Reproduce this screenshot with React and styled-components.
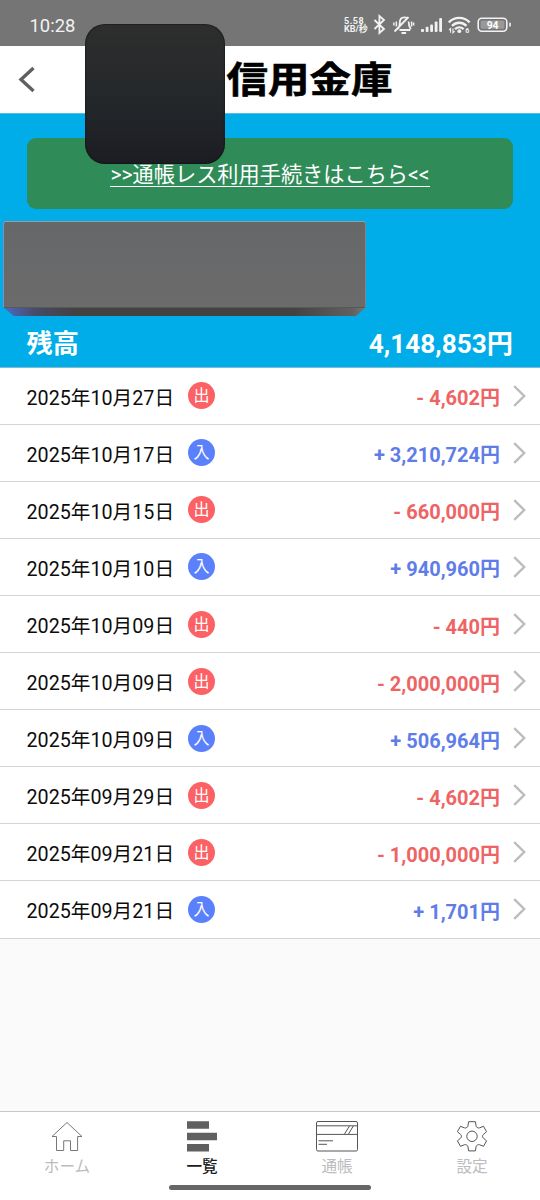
import styled, { createGlobalStyle, css } from "styled-components";

const GlobalStyle = createGlobalStyle`
    * {
        box-sizing: border-box;
    }
    body {
        margin: 0;
        background: #fafafa;
        font-family: Roboto, "Noto Sans CJK JP", sans-serif;
    }
`;

const Screen = styled.div`
    position: relative;
    display: flex;
    flex-direction: column;
    width: 540px;
    height: 1200px;
    overflow: hidden;
    background: #fafafa;
`;

const StatusBar = styled.div`
    display: flex;
    align-items: center;
    justify-content: space-between;
    flex: none;
    height: 46px;
    padding: 5px 28px 0 29.5px;
    background: #757575;
    color: #f2f2f2;
`;

const Clock = styled.div`
    font-size: 18.4px;
    font-weight: 400;
    line-height: 24px;
`;

const StatusIcons = styled.div`
    display: flex;
    align-items: center;
    height: 30px;
    padding-bottom: 1px;
`;

const NetSpeed = styled.div`
    width: 25px;
    font-size: 9px;
    font-weight: 700;
    line-height: 8.5px;
    white-space: nowrap;
`;

const SpeedValue = styled.div`
    letter-spacing: 0.5px;
`;

const Header = styled.header`
    display: flex;
    align-items: center;
    flex: none;
    height: 67px;
    padding: 0 0 0 18px;
    background: #fff;
`;

const BankName = styled.div`
    margin-left: 191.5px;
    padding-top: 3px;
    font-size: 41.5px;
    font-weight: 700;
    line-height: 60px;
    color: #000;
    -webkit-text-stroke: 0.7px #000;
    transform: scaleY(0.87);
`;

const AppCover = styled.div`
    position: absolute;
    left: 85px;
    top: 24px;
    width: 139.5px;
    height: 139.5px;
    border-radius: 20px;
    background: linear-gradient(#2d2e2d, #25282b 50%, #1b1d22);
    box-shadow: inset 0 0 1px 1px rgba(10, 14, 16, 0.4);
`;

const Summary = styled.section`
    display: flex;
    flex-direction: column;
    flex: none;
    height: 254.6px;
    padding-top: 24px;
    background: #00ade9;
    border-top: 1px solid #55bfe0;
    border-bottom: 1px solid #7fbcd2;
`;

const NoticeButton = styled.div`
    display: flex;
    justify-content: center;
    flex: none;
    height: 70.5px;
    margin: 0 27px;
    padding-top: 21px;
    border-radius: 9px;
    background: #2f8b57;
    color: #fff;
    font-size: 21.2px;
    line-height: 32px;
`;

const NoticeLink = styled.span`
    height: 28px;
    border-bottom: 1px solid #fff;
    white-space: nowrap;
`;

const AccountPlate = styled.div`
    flex: none;
    width: 363px;
    height: 95px;
    margin: 12.5px 0 0 3px;
`;

const PlateFront = styled.div`
    height: 87px;
    border: 1px solid #858589;
    border-top-color: #9a9ca8;
    border-left-color: #8290b8;
    border-bottom-color: #59595b;
    border-radius: 3px 3px 2px 2px;
    background: linear-gradient(#666768, #6b6b6c);
`;

const PlateEdge = styled.div`
    height: 8px;
    background: linear-gradient(90deg, #4d6bc4, #464b68 9%, #424242 20%, #424242 80%, #606060 96%, #777);
    clip-path: polygon(1px 0, 362px 0, 353px 100%, 11px 100%);
`;

const Balance = styled.div`
    display: flex;
    align-items: center;
    justify-content: space-between;
    height: 49px;
    padding: 2px 27px 0 26.5px;
    color: #fff;
    font-size: 26.2px;
    font-weight: 700;
`;

const List = styled.div`
    flex: none;
    background: #fff;
`;

const Row = styled.div`
    display: flex;
    align-items: center;
    height: 57.1px;
    padding: 0 14px 0 26.5px;
    border-bottom: 1px solid #d4d4d4;
`;

const RowDate = styled.div`
    width: 161.5px;
    font-size: 19.7px;
    line-height: 30px;
    white-space: nowrap;
    color: #0c0c0c;
    padding-top: 6px;
`;

const Badge = styled.div`
    display: flex;
    align-items: center;
    justify-content: center;
    width: 27px;
    height: 27px;
    padding-top: 1px;
    border-radius: 50%;
    background: ${({ $income }) => ($income ? "#5b80fb" : "#fb6165")};
    color: #fff;
    font-size: 16px;
    line-height: 26px;
`;

const Amount = styled.div`
    flex: 1;
    padding-top: 5px;
    text-align: right;
    font-size: 20px;
    font-weight: 700;
    line-height: 30px;
    color: ${({ $income }) => ($income ? "#5f7de8" : "#ee6464")};
`;

const RowArrow = styled.svg`
    flex: none;
    width: 13px;
    height: 22px;
    margin-left: 13px;
`;

const TabBar = styled.nav`
    display: grid;
    grid-template-columns: repeat(4, 1fr);
    flex: none;
    height: 89px;
    margin-top: auto;
    border-top: 1px solid #c9c9c9;
    background: #fff;
`;

const Tab = styled.div`
    display: flex;
    flex-direction: column;
    align-items: center;
    padding: 9px 1px 0 0;
    font-size: 15.6px;
    line-height: 24px;
    color: #bcbcc0;
    ${({ $active }) =>
        $active &&
        css`
            color: #1c1c1c;
            font-weight: 500;
        `}
    svg {
        flex: none;
        height: 32px;
    }
`;

const TabLabel = styled.span`
    margin-top: 2px;
`;

const GestureBar = styled.div`
    position: absolute;
    left: 169px;
    bottom: 10px;
    width: 202px;
    height: 5px;
    border-radius: 3px;
    background: #666;
`;

const entries = [
    { date: "2025年10月27日", amount: "4,602" },
    { date: "2025年10月17日", amount: "3,210,724", income: true },
    { date: "2025年10月15日", amount: "660,000" },
    { date: "2025年10月10日", amount: "940,960", income: true },
    { date: "2025年10月09日", amount: "440" },
    { date: "2025年10月09日", amount: "2,000,000" },
    { date: "2025年10月09日", amount: "506,964", income: true },
    { date: "2025年09月29日", amount: "4,602" },
    { date: "2025年09月21日", amount: "1,000,000" },
    { date: "2025年09月21日", amount: "1,701", income: true },
];

// bluetooth, muted bell, signal, wifi and battery, in one strip
const SystemIcons = () => (
    <svg width="143" height="26" viewBox="369 12 143 26" fill="none" stroke="#f2f2f2" strokeWidth="1.8">
        <path d="M374.5 20l9.5 9-4.6 4V16l4.6 4-9.5 9" />
        <path d="M399.5 30h10.8M397.5 29.2c2-1.8 2.3-3.6 2.3-6.4 0-3.2 1.6-5.4 4.4-5.4 1 0 2 .3 2.7.9M408.6 21.6c0 3 .2 5 2.2 7.6M394.5 31.5l14-14.5M401.5 33h4.6" />
        <path strokeWidth="1.5" d="M396.4 21.5v5M393.9 22.5v3M411.6 21.5v5M413.6 22.5v3" />
        <g fill="#f2f2f2" stroke="none">
            <rect x="421" y="29" width="3" height="3" rx="1" />
            <rect x="425.7" y="26.8" width="2.8" height="5.2" rx="1" />
            <rect x="430.2" y="24.4" width="2.8" height="7.6" rx="1" />
            <rect x="434.7" y="21.5" width="2.8" height="10.5" rx="1" />
            <rect x="439.2" y="18" width="2.8" height="14" rx="1" />
        </g>
        <path d="M448.8 22.4c5.8-6 15-6 20.8 0M452 25.9c4.2-4.2 10.3-4.2 14.5 0M455 29.2c2.6-2.5 6-2.5 8.6 0" strokeWidth="2.3" />
        <circle cx="459.3" cy="31.2" r="1.9" fill="#f2f2f2" stroke="none" />
        <path d="M450.6 32.8v-4.3l-1.6 1.6M453 28.5v4.3l1.6-1.6" strokeWidth="1.1" />
        <text x="465.3" y="33.4" fill="#f2f2f2" stroke="none" fontSize="7" fontWeight="700">6</text>
        <rect x="478.2" y="18.2" width="28.6" height="13" rx="3.6" strokeWidth="1.6" />
        <rect x="480.6" y="20.6" width="23.8" height="8.2" rx="1.5" fill="#999" stroke="none" />
        <path d="M510 22.8v3.8" strokeWidth="1.6" />
        <text x="492.6" y="28.6" textAnchor="middle" fill="#fff" stroke="none" fontSize="10.4" fontWeight="700">94</text>
    </svg>
);

const BackIcon = () => (
    <svg width="17" height="28" viewBox="0 0 17 28" fill="none" stroke="#606060" strokeWidth="3.4">
        <path d="M15.5 2L3 13.5l12.5 11.5" />
    </svg>
);

const HomeIcon = () => (
    <svg width="32" height="32" viewBox="0 0 32 32" fill="none" stroke="#777" strokeWidth="1">
        <path d="M16 1.5L1 15.5h4.5v14h7.2v-9.7h6.8v9.7h7.1v-14H31z" />
    </svg>
);

const ListIcon = () => (
    <svg width="30" height="32" viewBox="0 0 30 32" fill="#606060">
        <path d="M0 .3h22v7.4H0zM0 11.8h30v7.4H0zM0 23h22v7.4H0z" />
    </svg>
);

const PassbookIcon = () => (
    <svg width="42" height="32" viewBox="0 0 42 32" fill="none" stroke="#555" strokeWidth="1">
        <rect x=".5" y=".5" width="41" height="29.5" rx="1.5" />
        <path d="M.5 4.8h41M.5 13.4h41M2.5 19.8H17M2.5 23.3H11M28.5 13l5-8M32.5 13l4.8-8" />
    </svg>
);

const GearIcon = () => (
    <svg width="32" height="32" viewBox="0 0 32 32" fill="none" stroke="#555" strokeWidth="1">
        <circle cx="16" cy="15.3" r="5.2" />
        <path d="M12.6.7h6.8l.7 4.4q.1.8.9 1.2l.9.5q.8.4 1.5.1l4.1-1.6 3.1 5.4-3.3 2.8q-.8.7-.8 1.8t.8 1.8l3.3 2.8-3.1 5.4-4.1-1.6q-.7-.3-1.5.1l-.9.5q-.8.4-.9 1.2l-.7 4.4h-6.8l-.7-4.4q-.1-.8-.9-1.2l-.9-.5q-.8-.4-1.5-.1l-4.1 1.6-3.1-5.4 3.3-2.8q.8-.7.8-1.8t-.8-1.8l-3.3-2.8 3.1-5.4 4.1 1.6q.7.3 1.5-.1l.9-.5q.8-.4.9-1.2z" />
    </svg>
);

const tabs = [
    { label: "ホーム", icon: HomeIcon },
    { label: "一覧", icon: ListIcon, active: true },
    { label: "通帳", icon: PassbookIcon },
    { label: "設定", icon: GearIcon },
];

export default function App() {
    return (
        <Screen>
            <GlobalStyle />
            <StatusBar>
                <Clock>10:28</Clock>
                <StatusIcons>
                    <NetSpeed>
                        <SpeedValue>5.58</SpeedValue>
                        <div>KB/秒</div>
                    </NetSpeed>
                    <SystemIcons />
                </StatusIcons>
            </StatusBar>
            <Header>
                <BackIcon />
                <BankName>信用金庫</BankName>
            </Header>
            <Summary>
                <NoticeButton>
                    <NoticeLink>&gt;&gt;通帳レス利用手続きはこちら&lt;&lt;</NoticeLink>
                </NoticeButton>
                <AccountPlate>
                    <PlateFront />
                    <PlateEdge />
                </AccountPlate>
                <Balance>
                    <span>残高</span>
                    <span>4,148,853円</span>
                </Balance>
            </Summary>
            <List>
                {entries.map(({ date, amount, income }, index) => (
                    <Row key={index}>
                        <RowDate>{date}</RowDate>
                        <Badge $income={income}>{income ? "入" : "出"}</Badge>
                        <Amount $income={income}>
                            {income ? "+" : "-"} {amount}円
                        </Amount>
                        <RowArrow viewBox="0 0 13 22" fill="none" stroke="#bcbcbc" strokeWidth="2.4">
                            <path d="M1.2 1.2L11.2 11l-10 9.8" />
                        </RowArrow>
                    </Row>
                ))}
            </List>
            <TabBar>
                {tabs.map(({ label, icon: Icon, active }) => (
                    <Tab key={label} $active={active}>
                        <Icon />
                        <TabLabel>{label}</TabLabel>
                    </Tab>
                ))}
            </TabBar>
            <AppCover />
            <GestureBar />
        </Screen>
    );
}
